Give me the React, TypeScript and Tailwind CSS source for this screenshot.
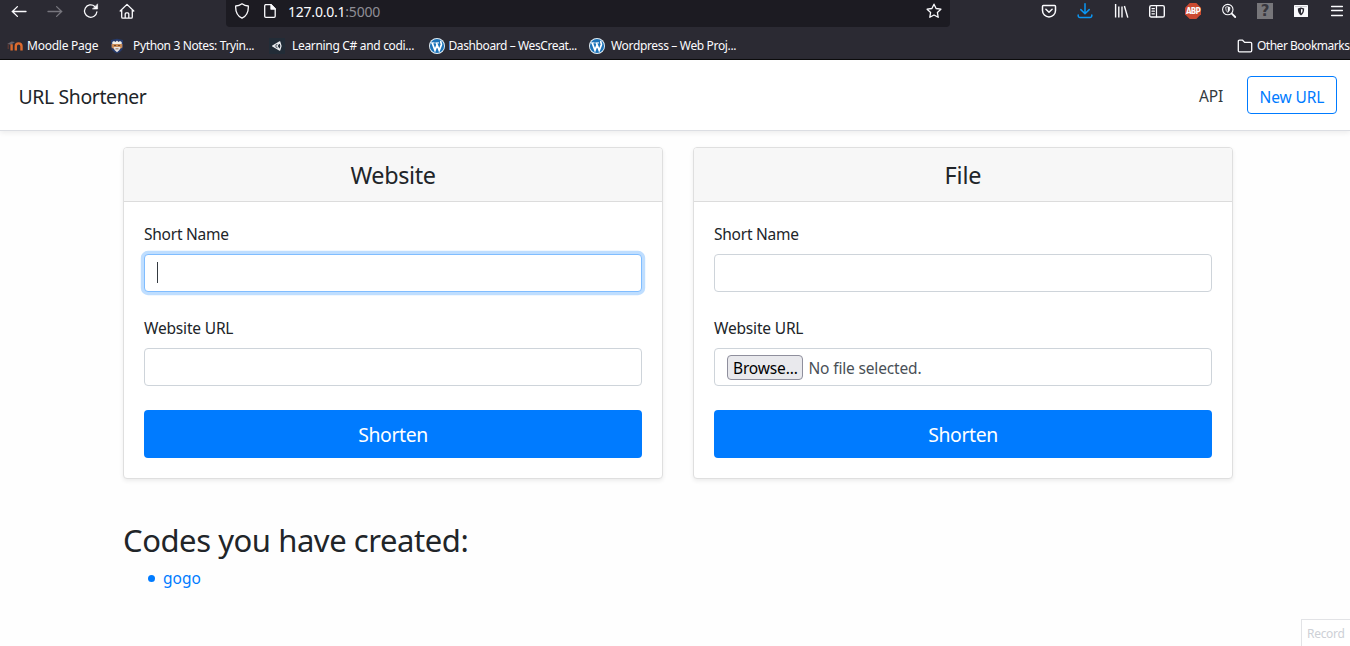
import type { ReactNode } from "react";

function Icon({ children, className = "text-[#fbfbfe]" }: { children: ReactNode; className?: string }) {
  return (
    <svg
      viewBox="0 0 16 16"
      fill="none"
      stroke="currentColor"
      strokeWidth="1.3"
      strokeLinecap="round"
      strokeLinejoin="round"
      className={`size-4 shrink-0 ${className}`}
    >
      {children}
    </svg>
  );
}

function WordPressIcon() {
  return (
    <svg viewBox="0 0 16 16" className="size-4 shrink-0" fill="none">
      <circle cx="8" cy="8" r="8" fill="#e4f0f8" />
      <circle cx="8" cy="8" r="7.1" fill="#1b72b8" />
      <path d="M2 4.9 H5.6 M6.4 4.9 H10" stroke="#fff" strokeWidth="1" />
      <path d="M3.2 5 L6 12.4 L8 7 M7.4 5 L10.2 12.4 L12.4 6.8 C12.8 5.2 11.2 4.6 12 3" stroke="#fff" strokeWidth="1.7" />
    </svg>
  );
}

function MoodleIcon() {
  return (
    <svg viewBox="0 0 16 16" className="size-4 shrink-0" fill="none">
      <path d="M0.2 6 L4.6 3.4 L8 4 L4 6.8 Z" fill="#68626a" />
      <path d="M1.2 6.4 V11" stroke="#6b3a34" strokeWidth="1" />
      <path d="M4.6 12.6 V6.2 M8.8 12.6 V8.2 Q8.8 5.4 11.6 5.4 Q14.5 5.4 14.5 8.2 V12.6" stroke="#dd6b2f" strokeWidth="2.4" />
    </svg>
  );
}

function CrestIcon() {
  return (
    <svg viewBox="0 0 16 16" className="size-4 shrink-0">
      <path d="M2 2 L8 0.8 L14 2 V8.5 Q14 13 8 15.5 Q2 13 2 8.5 Z" fill="#263a6b" />
      <path d="M3.3 4 L5 3 L6.5 4 L8 2.6 L9.5 4 L11 3 L12.7 4 V6 H3.3 Z" fill="#f1efe9" />
      <path d="M2.6 6 H13.4 V9.5 L11 11 H5 L2.6 9.5 Z" fill="#c98a55" />
      <path d="M4.5 9 H11.5 L10.5 12 L8 14.2 L5.5 12 Z" fill="#e8e4e2" />
      <path d="M5 7 H7 V8 H5 Z M9 7 H11 V8 H9 Z M6.5 10.5 H9.5 V11.3 H6.5 Z" fill="#6e4429" />
    </svg>
  );
}

function UnityIcon() {
  return (
    <svg viewBox="0 0 16 16" className="size-4 shrink-0" fill="none">
      <path d="M0 0 H16 V16 H0 Z" fill="#222c37" />
      <path d="M3.6 8 L10.8 3.8 L12 8 L10.8 12.2 Z M3.6 8 H8 M8 8 L10.8 3.8 M8 8 L10.8 12.2" stroke="#e9ebee" strokeWidth="1.2" strokeLinejoin="round" />
    </svg>
  );
}

function Bookmark({ icon, label, className, textClass }: { icon: ReactNode; label: string; className: string; textClass: string }) {
  return (
    <div className={`flex shrink-0 items-center ${className}`}>
      {icon}
      <span className={`whitespace-nowrap ${textClass}`}>{label}</span>
    </div>
  );
}

function BrowserChrome() {
  return (
    <div className="flex h-[60px] flex-col border-b border-[#0c0c0d] bg-[#2b2a33] text-[#fbfbfe]">
      <div className="flex h-[27px] items-start">
        <div className="flex w-[226px] gap-5 pt-[3px] pl-[11px]">
          <Icon><path d="M1.2 8.5 H15 M6.4 3.6 L1.4 8.5 L6.4 13.4" /></Icon>
          <Icon className="text-[#77767e]"><path d="M1 8.5 H14.8 M9.6 3.6 L14.6 8.5 L9.6 13.4" /></Icon>
          <Icon>
            <path d="M13.9 8.8 A6.2 6.2 0 1 1 11.8 3.4" />
            <path d="M14.6 1.2 V6 H9.8 Z" fill="currentColor" strokeWidth="0.6" />
          </Icon>
          <Icon>
            <path d="M1.2 8 L8 1.4 L14.8 8 M2.7 7 V13.9 Q2.7 15.1 3.9 15.1 H12.1 Q13.3 15.1 13.3 13.9 V7 M6.2 14.9 V10.9 Q6.2 9.9 7.2 9.9 H8.8 Q9.8 9.9 9.8 10.9 V14.9" />
          </Icon>
        </div>
        <div className="flex h-[27px] w-[724px] items-start rounded-b bg-[#1c1b22] pt-[3px] pr-2 pl-2">
          <Icon><path d="M8 0.8 Q10.8 2.9 14.3 3 Q14.8 11.8 8 15.2 Q1.2 11.8 1.7 3 Q5.2 2.9 8 0.8 Z" /></Icon>
          <Icon className="ml-3 text-[#fbfbfe]">
            <path d="M3.4 1.7 H9 L13.2 5.9 V13.2 Q13.2 14.3 12.1 14.3 H3.9 Q2.7 14.3 2.7 13.2 V2.7 Q2.7 1.7 3.8 1.7 Z" />
            <path d="M9 1.7 V6 H13.2 Z" fill="currentColor" />
          </Icon>
          <span className="ml-[10px] flex-1 text-sm leading-[18px] tracking-[-0.22px]">
            127.0.0.1<span className="text-[#8f8e96]">:5000</span>
          </span>
          <Icon><path d="M8 1.2 L10.1 5.5 L14.9 6.2 L11.4 9.5 L12.2 14.3 L8 12 L3.8 14.3 L4.6 9.5 L1.1 6.2 L5.9 5.5 Z" /></Icon>
        </div>
        <div className="flex flex-1 justify-end gap-5 pt-[3px] pr-[5px]">
          <Icon><path d="M2.4 2.6 H13.6 Q14.5 2.6 14.5 3.5 V7.4 A6.5 6.5 0 0 1 1.5 7.4 V3.5 Q1.5 2.6 2.4 2.6 Z M4.9 6.3 L8 9.3 L11.1 6.3" strokeWidth="1.5" /></Icon>
          <Icon className="text-[#0a97f5]"><path d="M8 0.8 V10.6 M3.8 6.6 L8 10.8 L12.2 6.6 M1.2 12 V13 Q1.2 14.4 2.8 14.4 H13.2 Q14.8 14.4 14.8 13 V12" strokeWidth="1.5" /></Icon>
          <Icon><path d="M2.6 1 V14.6 M5.8 3.6 V14.6 M9 3.6 V14.6 M11.4 3 L14.8 14.6" strokeLinecap="butt" strokeWidth="1.4" /></Icon>
          <Icon>
            <rect x="0.7" y="2.6" width="14.6" height="11.4" rx="1.6" strokeWidth="1.4" />
            <path d="M7.5 2.6 V14 M3 5.6 H5.4 M3 8.2 H5.4 M3 10.8 H5.4" strokeWidth="1.2" />
          </Icon>
          <div className="grid size-4 shrink-0 place-items-center">
            <svg viewBox="0 0 16 16" className="col-start-1 row-start-1 size-4">
              <path d="M4.7 0 H11.3 L16 4.7 V11.3 L11.3 16 H4.7 L0 11.3 V4.7 Z" fill="#cb4a31" />
            </svg>
            <span className="col-start-1 row-start-1 pt-px font-['DejaVu_Sans_Condensed','DejaVu_Sans',sans-serif] text-[8px] leading-none font-bold tracking-[-0.7px]">ABP</span>
          </div>
          <Icon>
            <circle cx="6.8" cy="6.6" r="5.2" strokeWidth="1.1" />
            <path d="M10.8 10.6 L14.2 14" strokeWidth="1.8" />
            <path d="M6.8 3.8 L9 4.6 Q9 8 6.8 9.4 Q4.6 8 4.6 4.6 Z" strokeWidth="0.8" />
            <path d="M6.8 3.8 L9 4.6 Q9 8 6.8 9.4 Z" fill="currentColor" stroke="none" />
          </Icon>
          <div className="flex size-4 shrink-0 items-center justify-center bg-[#77767a] pt-px font-['DejaVu_Sans',sans-serif] text-[15px] leading-none font-bold text-[#38373e]">?</div>
          <Icon>
            <path d="M1.6 2 H14.4 Q15 2 15 2.6 V13.4 Q15 14 14.4 14 H1.6 Q1 14 1 13.4 V2.6 Q1 2 1.6 2 Z" fill="currentColor" stroke="none" />
            <path d="M2.5 3.6 H13.5" stroke="#b9b9bf" strokeWidth="0.8" />
            <path d="M4.8 5.4 L8 4.6 L11.2 5.4 Q11.2 10.2 8 12.4 Q4.8 10.2 4.8 5.4 Z" fill="#2b2a33" stroke="none" />
            <path d="M8 6 L9.8 6.4 Q9.7 9.2 8 10.6 Z" fill="currentColor" stroke="none" />
          </Icon>
          <Icon><path d="M2.6 3.5 H13.4 M2.6 7.5 H13.4 M2.6 12.5 H13.4" strokeWidth="1.3" /></Icon>
        </div>
      </div>
      <div className="flex h-8 items-center pt-[5px] pl-[7px] text-xs">
        <Bookmark icon={<MoodleIcon />} label="Moodle Page" className="w-[102px]" textClass="ml-[4px] tracking-[-0.25px]" />
        <Bookmark icon={<CrestIcon />} label="Python 3 Notes: Tryin..." className="w-[160px]" textClass="ml-[8px] tracking-[-0.36px]" />
        <Bookmark icon={<UnityIcon />} label="Learning C# and codi..." className="w-[160px]" textClass="ml-[7px] tracking-[-0.32px]" />
        <Bookmark icon={<WordPressIcon />} label="Dashboard – WesCreat..." className="w-[160px]" textClass="ml-[3.5px] tracking-[-0.4px]" />
        <Bookmark icon={<WordPressIcon />} label="Wordpress – Web Proj..." className="w-[160px]" textClass="ml-[6px] tracking-[-0.34px]" />
        <Bookmark
          icon={<Icon><path d="M1.3 12.6 V3.4 Q1.3 2.2 2.5 2.2 H5.6 L7.6 4.4 H13.5 Q14.7 4.4 14.7 5.6 V12.6 Q14.7 13.8 13.5 13.8 H2.5 Q1.3 13.8 1.3 12.6 Z" /></Icon>}
          label="Other Bookmarks"
          className="ml-auto pr-[0.5px]"
          textClass="ml-[3.5px] tracking-[-0.48px]"
        />
      </div>
    </div>
  );
}

function Field({ label, labelClass, focused = false, children }: { label: string; labelClass: string; focused?: boolean; children?: ReactNode }) {
  return (
    <div className="mb-6 flex flex-col gap-2">
      <label className={`pt-px text-[15.5px] leading-[23px] ${labelClass}`}>{label}</label>
      <div
        className={
          focused
            ? "flex h-[38px] items-center rounded border border-[#80bdff] bg-white px-3 shadow-[0_0_0_3.2px_#bfdeff]"
            : "flex h-[38px] items-center rounded border border-[#ced4da] bg-white px-3"
        }
      >
        {children}
      </div>
    </div>
  );
}

function Card({ title, titleClass, children }: { title: string; titleClass: string; children: ReactNode }) {
  return (
    <section className="w-[540px] shrink-0 rounded border border-[#dfdfdf] bg-white shadow-[0_2px_4px_rgba(0,0,0,0.075)]">
      <header className="h-[54px] rounded-t-[3px] border-b border-[#dcdcdc] bg-[#f7f7f7] pt-3 text-center">
        <h4 className={`text-[23.4px] leading-[30px] font-normal ${titleClass}`}>{title}</h4>
      </header>
      <div className="p-5">
        {children}
        <button className="block h-12 w-full rounded bg-[#007bff] pt-px text-center text-[19.4px] leading-[30px] tracking-[-0.38px] text-white">Shorten</button>
      </div>
    </section>
  );
}

export default function App() {
  return (
    <div className="flex h-[646px] w-[1350px] flex-col overflow-hidden bg-[#fefefe] font-['Noto_Sans','Open_Sans',sans-serif] text-[#212529]">
      <BrowserChrome />
      <nav className="flex h-[71px] shrink-0 items-center border-b border-[#dcdee3] bg-white pr-[13px] pl-[18px] shadow-[0_2px_5px_rgba(0,0,0,0.07)]">
        <span className="mt-[3px] flex-1 pl-[0.5px] text-[19.4px] tracking-[-0.36px]">URL Shortener</span>
        <span className="mt-[4px] mr-6 text-[15.5px] tracking-[-0.15px] text-[#343a40]">API</span>
        <button className="-mt-px h-[38px] w-[90px] rounded border border-[#007bff] pt-[4px] text-[15.5px] leading-[22px] tracking-[-0.1px] text-[#007bff]">New URL</button>
      </nav>
      <main className="flex-1 px-[123px] pt-4">
        <div className="flex gap-[30px]">
          <Card title="Website" titleClass="tracking-[-0.38px]">
            <Field label="Short Name" labelClass="tracking-[-0.24px]" focused>
              <span className="-mt-[1px] h-[21px] w-px bg-[#343a40]" />
            </Field>
            <Field label="Website URL" labelClass="tracking-[-0.18px]" />
          </Card>
          <Card title="File" titleClass="tracking-[-0.15px]">
            <Field label="Short Name" labelClass="tracking-[-0.24px]" />
            <Field label="Website URL" labelClass="tracking-[-0.18px]">
              <span className="h-[25px] w-[76px] rounded-[4px] border border-[#8f8f9d] bg-[#e9e9ed] pl-[5px] text-[15.5px] leading-[24px] tracking-[-0.15px] text-black">Browse...</span>
              <span className="ml-[5.5px] pt-[3px] text-[15.5px] tracking-[-0.16px] text-[#495057]">No file selected.</span>
            </Field>
          </Card>
        </div>
        <h2 className="mt-[42px] text-[31px] leading-[38px] font-normal tracking-[-0.44px]">Codes you have created:</h2>
        <ul className="mt-[7px] pl-[25px] text-[15.5px] leading-6 text-[#007bff]">
          <li className="flex items-center">
            <span className="size-[7px] rounded-full bg-[#007bff]" />
            <a className="ml-2">gogo</a>
          </li>
        </ul>
      </main>
      <div className="-mt-[27px] flex h-[27px] w-[49px] shrink-0 items-center self-end border-t border-l border-[#e2e3e6] bg-white pt-[2px] pl-[5px] text-xs tracking-[-0.3px] text-[#cdd0d6]">Record</div>
    </div>
  );
}
